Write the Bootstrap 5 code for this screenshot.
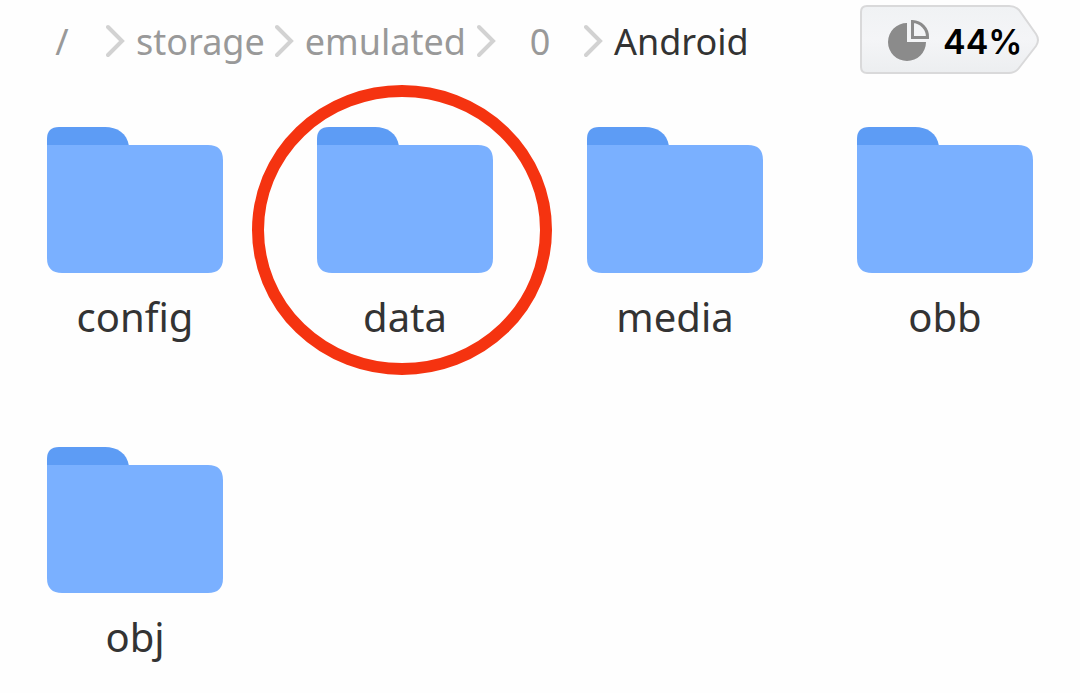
<!DOCTYPE html>
<html lang="en">
<head>
<meta charset="utf-8">
<meta name="viewport" content="width=device-width, initial-scale=1">
<title>Android</title>
<link href="https://cdn.jsdelivr.net/npm/bootstrap@5.3.0/dist/css/bootstrap.min.css" rel="stylesheet">
<style>
body { font-family: "Noto Sans", sans-serif; color: #333; background: #fefefe; }
.topbar { height: 80px; padding: 0 40px 0 18px; }
.path-list { font-size: 36px; line-height: 48px; padding-top: 2px; }
.path-list li { display: flex; align-items: center; }
.path-list a, .path-list .current { min-width: 88px; padding: 2px 10px 0; text-align: center; }
.path-list a { color: #999; }
.path-list svg { width: 20px; height: 34px; flex: none; }
.usage { position: relative; width: 180px; height: 70px; padding: 2px 20px 0 28px; gap: 13px; color: #000; font: 600 34px/48px Inter, sans-serif; }
.usage .tag { position: absolute; inset: 0; z-index: -1; }
.usage span { padding-top: 2px; }
.folders { margin-top: 46px; row-gap: 74px; }
.folder { position: relative; color: #333; font-size: 40px; line-height: 56px; }
.folder .folder-icon { width: 176px; height: 148px; margin-bottom: 15px; }
.folder .ring { position: absolute; top: -42px; left: 50%; width: 300px; height: 292px; margin-left: -153px; }
.row-cell { height: 246px; }
</style>
</head>
<body>
<header class="topbar d-flex align-items-center justify-content-between">
  <nav aria-label="Path">
    <ol class="path-list list-unstyled d-flex mb-0">
      <li><a class="text-decoration-none" href="#">/</a></li>
      <li><svg viewBox="0 0 20 34" aria-hidden="true"><path d="M2 3 16 17 2 31" fill="none" stroke="#d2d2d2" stroke-width="4" stroke-linecap="round"/></svg><a class="text-decoration-none" href="#">storage</a></li>
      <li><svg viewBox="0 0 20 34" aria-hidden="true"><path d="M2 3 16 17 2 31" fill="none" stroke="#d2d2d2" stroke-width="4" stroke-linecap="round"/></svg><a class="text-decoration-none" href="#">emulated</a></li>
      <li><svg viewBox="0 0 20 34" aria-hidden="true"><path d="M3 3 17 17 3 31" fill="none" stroke="#d2d2d2" stroke-width="4" stroke-linecap="round"/></svg><a class="text-decoration-none" href="#">0</a></li>
      <li><svg viewBox="0 0 20 34" aria-hidden="true"><path d="M2 3 16 17 2 31" fill="none" stroke="#d2d2d2" stroke-width="4" stroke-linecap="round"/></svg><span class="current" aria-current="page">Android</span></li>
    </ol>
  </nav>
  <button type="button" class="usage d-flex align-items-center border-0 bg-transparent z-0">
    <svg class="tag" width="180" height="70" viewBox="0 0 180 70" aria-hidden="true">
      <defs><linearGradient id="tagFill" x1="0" y1="0" x2="0" y2="1"><stop offset="0" stop-color="#f0f2f4"/><stop offset=".5" stop-color="#f4f5f7"/><stop offset="1" stop-color="#eceef0"/></linearGradient></defs>
      <path d="M7 1H149Q155 1 159 5L176 29Q180 35 176 41L159 63Q155 68 149 68H7Q1 68 1 62V7Q1 1 7 1Z" fill="url(#tagFill)" stroke="#d9d9da" stroke-width="2"/>
    </svg>
    <svg class="flex-shrink-0" width="42" height="42" viewBox="0 0 42 42" aria-hidden="true">
      <path d="M19 3A19 19 0 1 0 38 22H19Z" fill="#8b8b8b"/>
      <path d="M24.500 1.500A15.500 15.500 0 0 1 39.500 17.500H24.500Z" fill="none" stroke="#8b8b8b" stroke-width="3"/>
    </svg>
    <span>44%</span>
  </button>
</header>
<svg class="d-none" aria-hidden="true">
  <symbol id="folder" viewBox="0 0 176 148">
    <path d="M0 24V13Q0 1 12 1H58C70 1 80 7 82 20V24Z" fill="#5d9cf5"/>
    <path d="M0 19H161Q176 19 176 34V132Q176 147 161 147H15Q0 147 0 132Z" fill="#7ab0ff"/>
  </symbol>
</svg>
<main class="folders row row-cols-4 gx-0">
  <div class="col row-cell"><a class="folder d-flex flex-column align-items-center text-decoration-none" href="#"><svg class="folder-icon" aria-hidden="true"><use href="#folder"/></svg>config</a></div>
  <div class="col row-cell"><a class="folder d-flex flex-column align-items-center text-decoration-none" href="#"><svg class="folder-icon" aria-hidden="true"><use href="#folder"/></svg>data<svg class="ring" viewBox="0 0 300 292" aria-hidden="true"><ellipse cx="150" cy="146" rx="144" ry="139" fill="none" stroke="#f53310" stroke-width="12"/></svg></a></div>
  <div class="col row-cell"><a class="folder d-flex flex-column align-items-center text-decoration-none" href="#"><svg class="folder-icon" aria-hidden="true"><use href="#folder"/></svg>media</a></div>
  <div class="col row-cell"><a class="folder d-flex flex-column align-items-center text-decoration-none" href="#"><svg class="folder-icon" aria-hidden="true"><use href="#folder"/></svg>obb</a></div>
  <div class="col row-cell"><a class="folder d-flex flex-column align-items-center text-decoration-none" href="#"><svg class="folder-icon" aria-hidden="true"><use href="#folder"/></svg>obj</a></div>
</main>
<script src="https://cdn.jsdelivr.net/npm/bootstrap@5.3.0/dist/js/bootstrap.bundle.min.js"></script>
</body>
</html>
